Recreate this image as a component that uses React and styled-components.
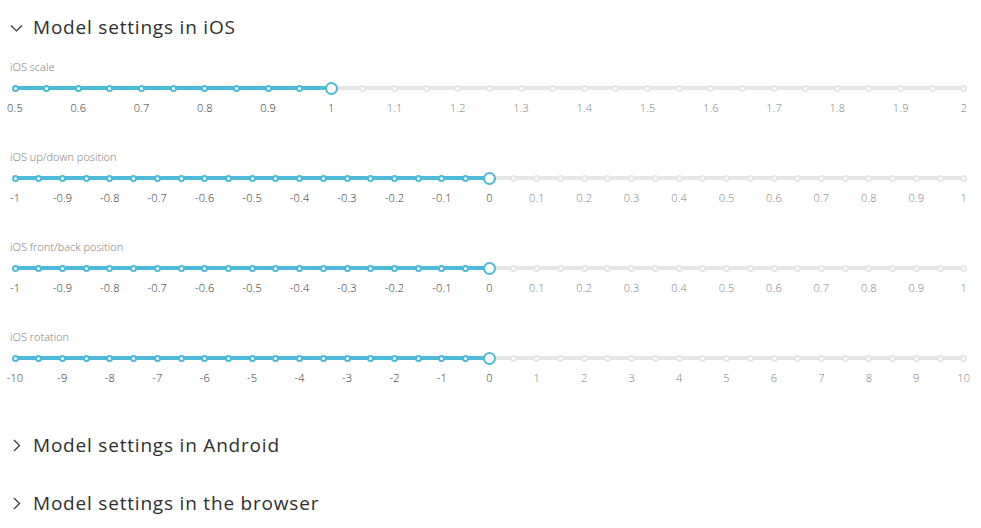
import React, { useState } from 'react';
import styled, { createGlobalStyle } from 'styled-components';

const ACTIVE = '#4ebad9';
const INACTIVE = '#e6e6e6';

const GlobalStyle = createGlobalStyle`
  body {
    margin: 0;
    background: #fff;
    font-family: 'Open Sans', 'Liberation Sans', sans-serif;
  }
`;

const Page = styled.div`
  width: 981px;
  padding: 14px 17px 0 15px;
  box-sizing: border-box;
`;

const Section = styled.section`
  margin-bottom: 32px;
`;

const SectionHeader = styled.button`
  display: flex;
  align-items: center;
  gap: 10px;
  height: 26px;
  padding: 0;
  margin: 0 0 0 -5px;
  border: none;
  background: none;
  cursor: pointer;
  font-family: 'Open Sans', 'Liberation Sans', sans-serif;
  font-size: 19px;
  font-weight: 400;
  color: #2f2f2f;
  letter-spacing: 0.8px;
`;

const Chevron = styled.svg`
  width: 13px;
  height: 13px;
  flex: none;
`;

const Body = styled.div`
  padding: 20px 0 15px;
  display: flex;
  flex-direction: column;
  gap: 35px;
`;

const Block = styled.div`
  display: flex;
  flex-direction: column;
`;

const FieldLabel = styled.div`
  margin-left: -5px;
  font-size: 11px;
  font-weight: 300;
  line-height: 14px;
  color: #7a7a7a;
  margin-bottom: 7px;
`;

const Track = styled.div`
  height: 14px;
  display: flex;
  justify-content: space-between;
  align-items: center;
`;

const Stop = styled.div`
  width: 0;
  display: flex;
  justify-content: center;
`;

const Dot = styled.span`
  flex: none;
  width: ${p => (p.$thumb ? 13 : 7)}px;
  height: ${p => (p.$thumb ? 13 : 7)}px;
  box-sizing: border-box;
  border-radius: 50%;
  background: #fff;
  border: 2px solid ${p => (p.$on ? ACTIVE : INACTIVE)};
`;

const Ticks = styled.div`
  margin-top: 6px;
  display: flex;
  justify-content: space-between;
`;

const Tick = styled.div`
  width: 0;
  display: flex;
  justify-content: center;
  white-space: nowrap;
  font-size: 11px;
  font-weight: 300;
  line-height: 14px;
  letter-spacing: 0.2px;
  color: ${p => (p.$on ? '#2e2e2e' : '#808080')};
`;

const fmt = n => String(Math.round(n * 100) / 100);

function StepSlider({ label, min, max, step, labelEvery, value }) {
  const count = Math.round((max - min) / step);
  const current = Math.round((value - min) / step);
  const pct = (current / count) * 100;
  const stops = Array.from({ length: count + 1 }, (_, i) => i);
  const ticks = stops.filter(i => i % labelEvery === 0);

  return (
    <Block>
      <FieldLabel>{label}</FieldLabel>
      <Track
        style={{
          background: `linear-gradient(to right, ${ACTIVE} ${pct}%, ${INACTIVE} ${pct}%) center / 100% 4px no-repeat`,
        }}
      >
        {stops.map(i => (
          <Stop key={i}>
            <Dot $on={i <= current} $thumb={i === current} />
          </Stop>
        ))}
      </Track>
      <Ticks>
        {ticks.map(i => (
          <Tick key={i} $on={i <= current}>
            {fmt(min + i * step)}
          </Tick>
        ))}
      </Ticks>
    </Block>
  );
}

const ChevronDown = () => (
  <Chevron viewBox="0 0 13 13" fill="none" stroke="#333" strokeWidth="1.2">
    <path d="M1 4.5 L6.5 10 L12 4.5" />
  </Chevron>
);

const ChevronRight = () => (
  <Chevron viewBox="0 0 13 13" fill="none" stroke="#333" strokeWidth="1.2">
    <path d="M4 1 L9.5 6.5 L4 12" />
  </Chevron>
);

const iosSliders = [
  { label: 'iOS scale', min: 0.5, max: 2, step: 0.05, labelEvery: 2, value: 1 },
  { label: 'iOS up/down position', min: -1, max: 1, step: 0.05, labelEvery: 2, value: 0 },
  { label: 'iOS front/back position', min: -1, max: 1, step: 0.05, labelEvery: 2, value: 0 },
  { label: 'iOS rotation', min: -10, max: 10, step: 0.5, labelEvery: 2, value: 0 },
];

export default function App() {
  const [open, setOpen] = useState('ios');
  const sections = [
    { id: 'ios', title: 'Model settings in iOS' },
    { id: 'android', title: 'Model settings in Android' },
    { id: 'browser', title: 'Model settings in the browser' },
  ];

  return (
    <Page>
      <GlobalStyle />
      {sections.map(s => (
        <Section key={s.id}>
          <SectionHeader onClick={() => setOpen(open === s.id ? null : s.id)}>
            {open === s.id ? <ChevronDown /> : <ChevronRight />}
            {s.title}
          </SectionHeader>
          {open === s.id && s.id === 'ios' && (
            <Body>
              {iosSliders.map(sl => (
                <StepSlider key={sl.label} {...sl} />
              ))}
            </Body>
          )}
        </Section>
      ))}
    </Page>
  );
}
